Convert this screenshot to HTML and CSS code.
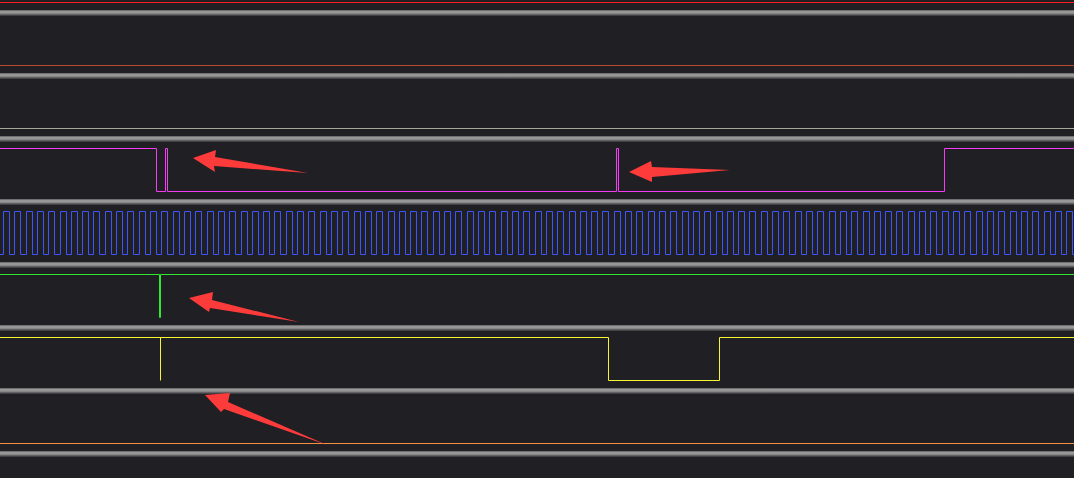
FILE: index.html
```html
<!DOCTYPE html>
<html lang="en">
<head>
    <meta charset="UTF-8">
    <meta name="viewport" content="width=device-width, initial-scale=1.0">
    <title>Logic Analyzer - Waveforms</title>
    <link rel="stylesheet" href="styles.css">
</head>
<body>

<div class="waves">
    <div class="lane lane-top">
        <svg width="1074" height="10"><path class="trace red" d="M0 2.5 H1074"/></svg>
    </div>
    <div class="bar"></div>
    <div class="lane">
        <svg width="1074" height="57"><path class="trace rust" d="M0 49.5 H1074"/></svg>
    </div>
    <div class="bar"></div>
    <div class="lane">
        <svg width="1074" height="57"><path class="trace gray" d="M0 49.5 H1074"/></svg>
    </div>
    <div class="bar"></div>
    <div class="lane">
        <svg width="1074" height="57"><path class="trace magenta" d="M0 6.5 H156.5 V49.5 H165.5 V6.5 H167.5 V49.5 H616.5 V6.5 H618.5 V49.5 H944.5 V6.5 H1074"/></svg>
    </div>
    <div class="bar"></div>
    <div class="lane">
        <svg width="1074" height="57"><path class="trace blue" id="clock" d=""/></svg>
    </div>
    <div class="bar"></div>
    <div class="lane">
        <svg width="1074" height="57"><path class="trace green" d="M0 6.5 H159.5 V49.5 H160.5 V6.5 H1074"/></svg>
    </div>
    <div class="bar"></div>
    <div class="lane">
        <svg width="1074" height="57"><path class="trace yellow" d="M0 6.5 H608.5 V49.5 H719.5 V6.5 H1074 M160.5 6.5 V49.5"/></svg>
    </div>
    <div class="bar"></div>
    <div class="lane">
        <svg width="1074" height="57"><path class="trace orange" d="M0 49.5 H1074"/></svg>
    </div>
    <div class="bar"></div>
    <div class="lane lane-end"></div>
</div>

<!-- setas de anotação por cima das formas de onda -->
<svg class="notes" width="1074" height="478">
    <polygon points="193,158 216,150 215,157 308,173 214,166 215,172"/>
    <polygon points="629,172 651,161 652,167 730,170 652,177 652,182"/>
    <polygon points="189,298 213,292 212,300 299,322 210,308 209,312"/>
    <polygon points="205,395 230,393 228,402 327,445 224,409 221,412"/>
</svg>

<script>
    // Gerar o sinal de clock
    function drawClock() {
        const period = 11.31;
        const high = 6;
        let d = 'M0 49.5 H3.5';
        for (let k = 0; k < 96; k++) {
            const rise = Math.round(3 + k * period) + 0.5;
            const fall = rise + high;
            const next = Math.round(3 + (k + 1) * period) + 0.5;
            d += ` V6.5 H${fall} V49.5 H${Math.min(next, 1080)}`;
        }
        document.getElementById('clock').setAttribute('d', d);
    }

    drawClock();
</script>

</body>
</html>
```

FILE: styles.css
```css
body {
    margin: 0;
    background-color: #1f1f24;
    overflow: hidden;
    font-family: "Liberation Sans", Arial, sans-serif;
}

.waves {
    display: flex;
    flex-direction: column;
    width: 1074px;
    height: 478px;
}

.lane {
    height: 57px;
    flex: none;
}

.lane svg {
    display: block;
}

.lane-top {
    height: 10px;
}

.lane-end {
    height: 21px;
}

.bar {
    height: 6px;
    flex: none;
    background: linear-gradient(#5e5e60, #a2a2a2 30%, #8c8c8c 55%, #4c4c50 85%, #343438);
}

.trace {
    fill: none;
    stroke-width: 1;
}

.red { stroke: #ff1e1e; }
.rust { stroke: #b8482a; }
.gray { stroke: #a8a898; }
.magenta { stroke: #f43cf4; }
.blue { stroke: #3c55ff; }
.green { stroke: #2ee82e; }
.yellow { stroke: #f5f532; }
.orange { stroke: #f09040; }

.notes {
    position: absolute;
    left: 0;
    top: 0;
    pointer-events: none;
}

.notes polygon {
    fill: #fd3b3b;
}
```
